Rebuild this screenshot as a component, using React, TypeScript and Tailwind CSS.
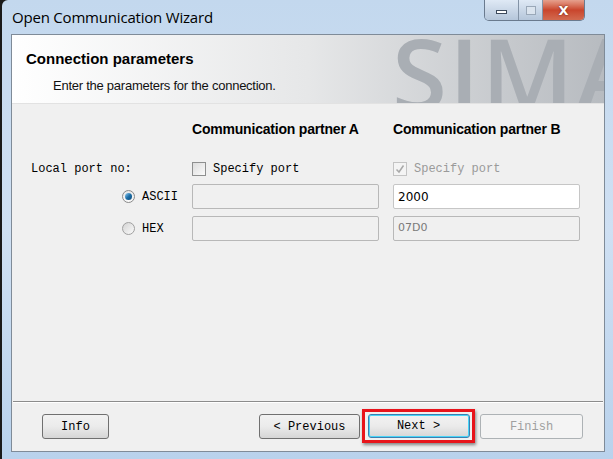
export default function App() {
  const mono = "font-['Liberation_Mono',monospace]"
  return (
    <div className="w-[613px] h-[459px] overflow-hidden bg-[#1a1a1a]">
      <div className="w-[611px] h-[459px] ml-[2px] flex flex-col bg-gradient-to-b from-[#c3d8ee] via-[#cfe0f3] to-[#b9d2ec] rounded-tl-[6px]">
        {/* Title bar */}
        <div className="h-[34px] flex items-start justify-between">
          <div className="pl-[10px] pt-[6px] text-[15px] text-black font-['Open_Sans',sans-serif] tracking-[-0.2px]">
            Open Communication Wizard
          </div>
          <div className="flex mr-[28px] h-[21px] rounded-b-[5px] overflow-hidden border border-t-0 border-[#6a7a8e]">
            <div className="w-[34px] flex items-center justify-center bg-gradient-to-b from-[#dfe9f5] to-[#b5c6da] border-r border-[#8393a6]">
              <div className="w-[11px] h-[4px] bg-white border border-[#3c4a5c] mt-[4px]" />
            </div>
            <div className="w-[24px] flex items-center justify-center bg-gradient-to-b from-[#dfe9f5] to-[#b5c6da] border-r border-[#8393a6]">
              <div className="w-[10px] h-[9px] border border-[#9aa8b8] bg-[#dbe4ee]" />
            </div>
            <div className="w-[41px] flex items-center justify-center bg-gradient-to-b from-[#e5a08d] via-[#c9452c] to-[#d26a4f]">
              <span className="text-white text-[13px] font-bold font-['DejaVu_Sans',sans-serif] leading-none [text-shadow:0_0_2px_#5a1a10]">
                X
              </span>
            </div>
          </div>
        </div>

        {/* Client area */}
        <div className="ml-[9px] mr-[8px] h-[418px] flex flex-col border border-[#7f8b98] bg-[#f0f0f0]">
          {/* Header */}
          <div className="relative h-[69px] overflow-hidden bg-gradient-to-r from-[#ffffff] via-[#e6e7e8] to-[#b7bbc0] border-b border-[#e2e2e2]">
            <div className="absolute left-[380px] top-0 h-[69px] w-[220px] overflow-hidden">
              <div className="mt-[-13px] text-[100px] leading-none tracking-[2px] text-[#a9aeb4] font-['Open_Sans',sans-serif] font-semibold">
                SIMA
              </div>
            </div>
            <div className="relative pl-[14px] pt-[13px] font-['Liberation_Sans',sans-serif]">
              <div className="text-[15px] font-bold text-black">Connection parameters</div>
              <div className="pl-[27px] pt-[5px] text-[13px] tracking-[-0.25px] text-[#111]">
                Enter the parameters for the connection.
              </div>
            </div>
          </div>

          {/* Body */}
          <div className="flex-1 pt-[15px] text-[12px] text-black">
            <div className="flex font-['Liberation_Sans',sans-serif] font-bold text-[14px] tracking-[-0.2px]">
              <div className="w-[180px]" />
              <div className="w-[201px]">Communication partner A</div>
              <div>Communication partner B</div>
            </div>

            <div className={`flex items-center mt-[21px] h-[16px] ${mono}`}>
              <div className="w-[180px] pl-[19px]">Local port no:</div>
              <div className="w-[201px] flex items-center gap-[7px]">
                <div className="w-[14px] h-[14px] border border-[#8e8f8f] bg-gradient-to-br from-[#dcdcdc] to-[#fbfbfb]" />
                <span>Specify port</span>
              </div>
              <div className="flex items-center gap-[7px] text-[#9a9a9a]">
                <div className="w-[14px] h-[14px] border border-[#c4c4c4] bg-[#f4f4f4] flex items-center justify-center">
                  <svg width="10" height="10" viewBox="0 0 10 10">
                    <path d="M1.5 5.5 L4 8 L8.5 1.5" fill="none" stroke="#a8a8a8" strokeWidth="1.5" />
                  </svg>
                </div>
                <span>Specify port</span>
              </div>
            </div>

            <div className={`flex items-center mt-[7px] h-[25px] ${mono}`}>
              <div className="w-[180px] flex items-center justify-end pr-[14px] gap-[7px]">
                <div className="w-[13px] h-[13px] rounded-full border border-[#8a8a8a] bg-gradient-to-b from-[#e8e8e8] to-[#fafafa] flex items-center justify-center">
                  <div className="w-[7px] h-[7px] rounded-full bg-gradient-to-br from-[#8fd0f5] via-[#1d6fa8] to-[#0d4a7a]" />
                </div>
                <span className="w-[36px]">ASCII</span>
              </div>
              <div className="w-[201px]">
                <div className="w-[187px] h-[25px] border border-[#b8b8b8] rounded-[2px] bg-[#f0f0f0]" />
              </div>
              <div className="w-[187px] h-[25px] border border-[#c6c6c6] rounded-[2px] bg-white flex items-center pl-[4px] text-[12px] font-['DejaVu_Sans',sans-serif]">
                2000
              </div>
            </div>

            <div className={`flex items-center mt-[7px] h-[25px] ${mono}`}>
              <div className="w-[180px] flex items-center justify-end pr-[14px] gap-[7px]">
                <div className="w-[13px] h-[13px] rounded-full border border-[#a0a0a0] bg-gradient-to-br from-[#d4d4d4] to-[#fbfbfb]" />
                <span className="w-[36px]">HEX</span>
              </div>
              <div className="w-[201px]">
                <div className="w-[187px] h-[25px] border border-[#b8b8b8] rounded-[2px] bg-[#f0f0f0]" />
              </div>
              <div className="w-[187px] h-[25px] border border-[#b8b8b8] rounded-[2px] bg-[#f0f0f0] flex items-center pl-[4px] text-[11px] text-[#7a7a7a] font-['DejaVu_Sans',sans-serif]">
                07D0
              </div>
            </div>
          </div>

          {/* Separator */}
          <div className="h-[2px] border-t border-[#8c8c8c] border-b border-b-white mx-[1px]" />

          {/* Footer */}
          <div className={`h-[48px] flex items-start pt-[11px] text-[12px] ${mono}`}>
            <button className="ml-[30px] w-[67px] h-[25px] rounded-[3px] border border-[#707070] bg-gradient-to-b from-[#f2f2f2] via-[#ebebeb] to-[#d6d6d6]">
              Info
            </button>
            <button className="ml-[150px] w-[101px] h-[25px] rounded-[3px] border border-[#707070] bg-gradient-to-b from-[#f2f2f2] via-[#ebebeb] to-[#d6d6d6]">
              &lt; Previous
            </button>
            <div className="ml-[2px] mt-[-5px] w-[113px] h-[34px] border-[3px] border-[#e8141b] shadow-[1px_2px_3px_rgba(0,0,0,0.45)] flex items-center justify-center">
              <button className="w-[102px] h-[24px] rounded-[3px] border border-[#3c7fb1] shadow-[inset_0_0_0_1px_#48d4f7] bg-gradient-to-b from-[#f2f2f2] via-[#ebebeb] to-[#d6d6d6]">
                Next &gt;
              </button>
            </div>
            <button className="ml-[5px] w-[103px] h-[25px] rounded-[3px] border border-[#adb2b5] bg-[#f4f4f4] text-[#a0a0a0]">
              Finish
            </button>
          </div>
        </div>
      </div>
    </div>
  )
}
